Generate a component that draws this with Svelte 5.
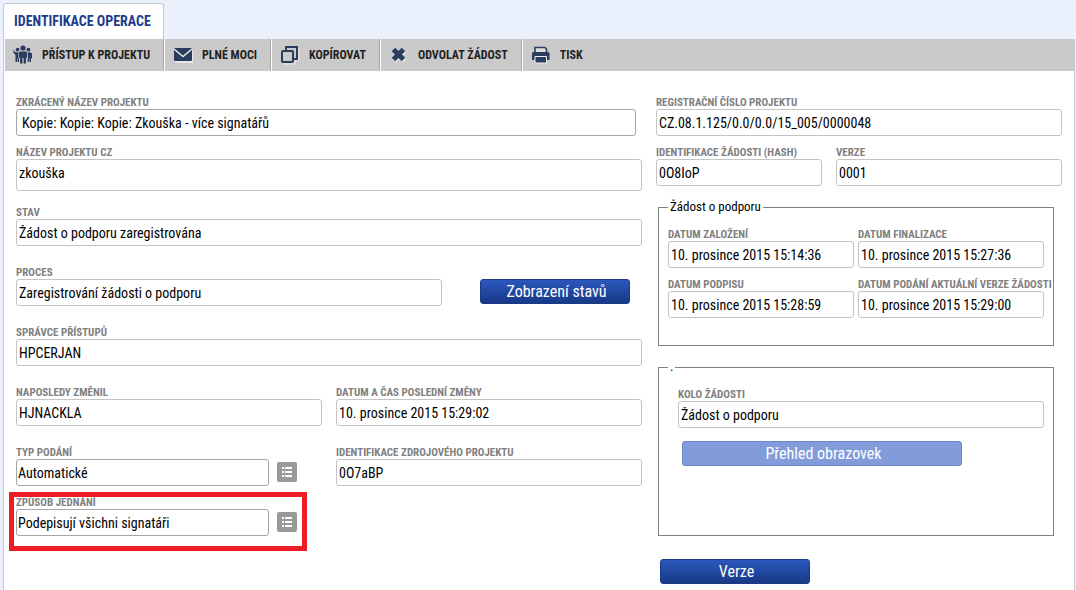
<script>
  let form = $state({
    shortName: 'Kopie: Kopie: Kopie: Zkouška - více signatářů',
    name: 'zkouška',
    status: 'Žádost o podporu zaregistrována',
    process: 'Zaregistrování žádosti o podporu',
    manager: 'HPCERJAN',
    changedBy: 'HJNACKLA',
    changedAt: '10. prosince 2015 15:29:02',
    submission: 'Automatické',
    source: '0O7aBP',
    signing: 'Podepisují všichni signatáři',
    regNumber: 'CZ.08.1.125/0.0/0.0/15_005/0000048',
    hash: '0O8IoP',
    version: '0001',
    created: '10. prosince 2015 15:14:36',
    finalized: '10. prosince 2015 15:27:36',
    signed: '10. prosince 2015 15:28:59',
    submitted: '10. prosince 2015 15:29:00',
    round: 'Žádost o podporu'
  });
</script>

{#snippet field(id, label, readonly = true)}
  <div class="field">
    <label for={id}>{label}</label>
    <input {id} type="text" class:editable={!readonly} {readonly} bind:value={form[id]} />
  </div>
{/snippet}

{#snippet listButton(label)}
  <button type="button" class="list" aria-label={label}>
    <svg width="20" height="20" viewBox="0 0 20 20" fill="#fff">
      <path d="M5 5h2v2H5zM8 5h7v2H8zM5 9h2v2H5zM8 9h7v2H8zM5 13h2v2H5zM8 13h7v2H8z" />
    </svg>
  </button>
{/snippet}

<div class="page">
  <div class="tabs">
    <a class="tab" href="#operace">IDENTIFIKACE OPERACE</a>
  </div>

  <main class="panel" id="operace">
    <div class="toolbar">
      <button type="button">
        <svg width="20" height="20" viewBox="0 0 20 20" fill="#2b3d5e">
          <circle cx="10" cy="3" r="2.6" />
          <circle cx="4.6" cy="4.6" r="1.9" />
          <circle cx="15.4" cy="4.6" r="1.9" />
          <path d="M7 6.500h6l1 1v5l-1 .5v5.500h-2.400V13H9.400v5.500H7V13l-1-.5v-5z" />
          <path d="M.6 4.500l1 2.200L3 7.200h2.400V13H6v4H4.600v-3.500H4V17H2.500V10L.2 7.200zM14.600 7.200H17l2 1.300v4.500l-1 .5V17h-1.500v-3.500h-.6V17h-1.300v-4h.4z" />
        </svg>
        PŘÍSTUP K PROJEKTU
      </button>
      <button type="button">
        <svg width="20" height="20" viewBox="0 0 20 20">
          <rect x="2" y="5" width="18" height="13" rx="1" fill="#e8e8e8" />
          <rect x="1" y="3" width="18" height="13" rx="1" fill="#2b3d5e" />
          <path d="M1 4L10 11.500 19 4" fill="none" stroke="#e8e8e8" stroke-width="1.500" />
        </svg>
        PLNÉ MOCI
      </button>
      <button type="button">
        <svg width="20" height="20" viewBox="0 0 20 20" fill="none" stroke-width="2">
          <path d="M3 19h12v-4h4V4" stroke="#eee" stroke-width="1" />
          <path d="M6 5V2h11v12h-3" stroke="#2b3d5e" />
          <rect x="2" y="6" width="11" height="11" rx="1" stroke="#2b3d5e" />
        </svg>
        KOPÍROVAT
      </button>
      <button type="button">
        <svg width="20" height="20" viewBox="0 0 20 20" fill="none" stroke-width="5">
          <path d="M5.500 5.500l10 10M15.500 5.500l-10 10" stroke="#eee" />
          <path d="M4.500 4.500l10 10M14.500 4.500l-10 10" stroke="#2b3d5e" />
        </svg>
        ODVOLAT ŽÁDOST
      </button>
      <button type="button">
        <svg width="20" height="20" viewBox="0 0 20 20">
          <path d="M4 8V2.500h10L15.500 4v4" fill="#ddd" stroke="#2b3d5e" stroke-width="1.600" />
          <path d="M1 8.500Q1 7 2.500 7h14.500q1.500 0 1.500 1.500V15H1z" fill="#2b3d5e" />
          <path d="M4 11.500h11.500v6.500H4z" fill="#2b3d5e" stroke="#eee" />
        </svg>
        TISK
      </button>
    </div>

    <form class="columns">
      <div class="left">
        <div class="short">
          {@render field('shortName', 'ZKRÁCENÝ NÁZEV PROJEKTU', false)}
        </div>
        <div class="field">
          <label for="name">NÁZEV PROJEKTU CZ</label>
          <textarea id="name" readonly bind:value={form.name}></textarea>
        </div>
        <div class="spaced">
          {@render field('status', 'STAV')}
        </div>
        <div class="spaced process">
          {@render field('process', 'PROCES')}
          <button type="button" class="action">Zobrazení stavů</button>
        </div>
        <div class="spaced">
          {@render field('manager', 'SPRÁVCE PŘÍSTUPŮ')}
        </div>
        <div class="spaced pair">
          {@render field('changedBy', 'NAPOSLEDY ZMĚNIL')}
          {@render field('changedAt', 'DATUM A ČAS POSLEDNÍ ZMĚNY')}
        </div>
        <div class="spaced pair">
          <div class="lookup">
            {@render field('submission', 'TYP PODÁNÍ', false)}
            {@render listButton('Vybrat typ podání')}
          </div>
          {@render field('source', 'IDENTIFIKACE ZDROJOVÉHO PROJEKTU')}
        </div>
        <div class="pair">
          <div class="lookup marked">
            {@render field('signing', 'ZPŮSOB JEDNÁNÍ', false)}
            {@render listButton('Vybrat způsob jednání')}
          </div>
        </div>
      </div>

      <div class="right">
        {@render field('regNumber', 'REGISTRAČNÍ ČÍSLO PROJEKTU')}
        <div class="hash">
          {@render field('hash', 'IDENTIFIKACE ŽÁDOSTI (HASH)')}
          {@render field('version', 'VERZE')}
        </div>

        <fieldset class="dates">
          <legend>Žádost o podporu</legend>
          <div class="date-grid">
            {@render field('created', 'DATUM ZALOŽENÍ')}
            {@render field('finalized', 'DATUM FINALIZACE')}
            {@render field('signed', 'DATUM PODPISU')}
            {@render field('submitted', 'DATUM PODÁNÍ AKTUÁLNÍ VERZE ŽÁDOSTI')}
          </div>
        </fieldset>

        <fieldset class="round">
          <legend>.</legend>
          {@render field('round', 'KOLO ŽÁDOSTI')}
          <button type="button" class="action overview" disabled>Přehled obrazovek</button>
        </fieldset>

        <button type="button" class="action version">Verze</button>
      </div>
    </form>
  </main>
</div>

<style>
  :global(body) {
    margin: 0;
    background: #ebf0fd;
  }

  .page {
    box-sizing: border-box;
    display: flex;
    flex-direction: column;
    min-height: 100vh;
    padding: 3px 1px 0 3px;
    font-family: 'Roboto Condensed', 'Liberation Sans Narrow', Roboto, sans-serif;
    font-size: 14px;
    color: #000;
  }

  button, input, textarea {
    box-sizing: border-box;
    margin: 0;
    font: inherit;
  }

  .tabs {
    display: flex;
  }

  .tab {
    padding: 0 12px 0 10px;
    border: 1px solid #c8c8cc;
    border-bottom: 0;
    border-radius: 3px 3px 0 0;
    background: #fff;
    color: #1d3c8c;
    font-weight: bold;
    line-height: 35px;
    text-decoration: none;
  }

  .panel {
    flex: 1;
    border: 1px solid #c8c8cc;
    border-top: 0;
    background: #fff;
  }

  .toolbar {
    display: flex;
    height: 32px;
    background: #cacaca;
  }

  .toolbar button {
    display: flex;
    align-items: center;
    gap: 9px;
    padding: 0 13px 0 8px;
    border: 0;
    border-left: 1px solid #fff;
    border-right: 1px solid #aaa;
    background: none;
    color: #222;
    font-size: 12px;
    font-weight: bold;
  }

  .toolbar button:last-child {
    border-right: 0;
  }

  .columns {
    display: grid;
    grid-template-columns: 626fr 406fr;
    gap: 14px;
    padding: 25px 12px 6px;
  }

  .left, .right {
    display: flex;
    flex-direction: column;
    gap: 10px;
    min-width: 0;
  }

  .short {
    padding-right: 6px;
  }

  .spaced {
    margin-top: 5px;
  }

  .spaced + .spaced {
    margin-top: 10px;
  }

  .field {
    display: flex;
    flex: 1;
    flex-direction: column;
    min-width: 0;
  }

  .left > .field, .right > .field {
    flex: none;
  }

  label {
    color: #808080;
    font-size: 11px;
    font-weight: bold;
    line-height: 13px;
    white-space: nowrap;
  }

  input, textarea {
    width: 100%;
    height: 27px;
    padding: 0 2px;
    border: 1px solid #c4c4c4;
    border-radius: 3px;
    background: #fff;
    color: #000;
    outline: 0;
  }

  input.editable {
    padding: 0 1px;
    border-color: #a6a6a6;
  }

  .short input.editable {
    padding-left: 5px;
  }

  textarea {
    display: block;
    height: 32px;
    padding-top: 4px;
    line-height: 18px;
    overflow: hidden;
    resize: none;
  }

  .pair {
    display: grid;
    grid-template-columns: 1fr 1fr;
    gap: 14px;
  }

  .process {
    display: flex;
    align-items: flex-end;
    gap: 38px;
    padding-right: 12px;
  }

  .process .action {
    margin-bottom: 2px;
  }

  .lookup {
    position: relative;
    display: flex;
    align-items: flex-end;
    gap: 8px;
    padding-right: 25px;
  }

  .marked::after {
    content: '';
    position: absolute;
    inset: -4px 15px -15px -7px;
    border: 5px solid #ee1c25;
    pointer-events: none;
  }

  .list {
    width: 20px;
    height: 20px;
    margin-bottom: 4px;
    padding: 0;
    border: 0;
    border-radius: 2px;
    background: #999;
  }

  .list svg {
    display: block;
  }

  .action {
    width: 150px;
    height: 25px;
    padding: 1px 0 0 3px;
    border: 1px solid #1a3a85;
    border-radius: 3px;
    background: linear-gradient(#2b57bd, #183a86);
    color: #fff;
    font-size: 16px;
    line-height: 22px;
  }

  .hash {
    display: grid;
    grid-template-columns: 166fr 226fr;
    gap: 14px;
  }

  fieldset {
    min-width: 0;
    margin: 3px 8px 0 2px;
    padding: 13px 9px 27px;
    border: 1px solid #808080;
  }

  legend {
    padding: 0 2px;
    font-size: 13px;
    line-height: 16px;
  }

  .date-grid {
    display: grid;
    grid-template-columns: 1fr 1fr;
    gap: 10px 4px;
  }

  .round {
    padding: 13px 9px 69px 19px;
  }

  .round legend {
    margin-left: -10px;
  }

  .overview {
    width: 280px;
    margin: 13px 0 0 4px;
    border-color: #6f88c5;
    background: #819bdb;
  }

  .version {
    margin: 13px 0 0 4px;
  }
</style>
